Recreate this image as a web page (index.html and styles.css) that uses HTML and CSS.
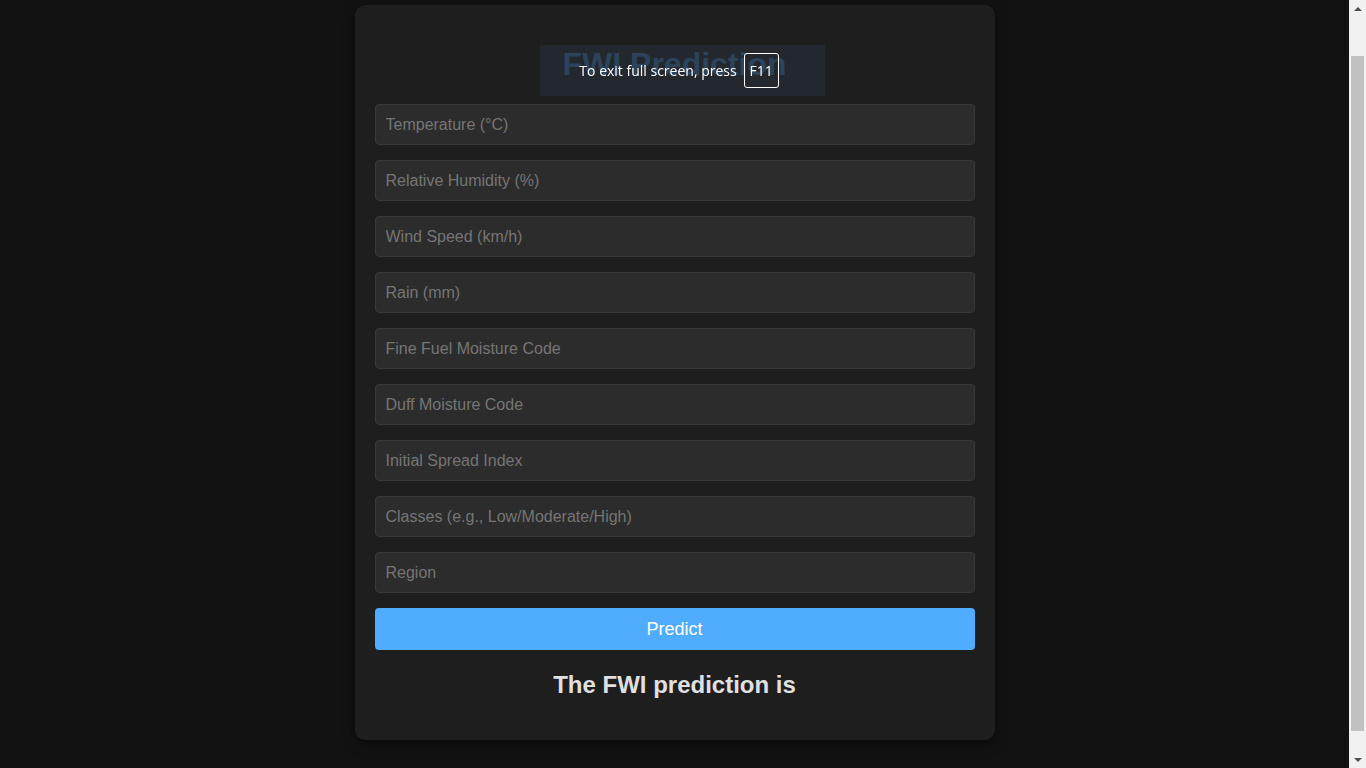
FILE: index.html
```html
<!DOCTYPE html>
<html lang="en">
<head>
<meta charset="utf-8">
<title>FWI Prediction</title>
<link rel="stylesheet" href="styles.css">
</head>
<body>
<main class="page">
  <div class="card">
    <h1 class="title">FWI Prediction</h1>
    <form class="form">
      <input class="field" type="text" placeholder="Temperature (°C)">
      <input class="field" type="text" placeholder="Relative Humidity (%)">
      <input class="field" type="text" placeholder="Wind Speed (km/h)">
      <input class="field" type="text" placeholder="Rain (mm)">
      <input class="field" type="text" placeholder="Fine Fuel Moisture Code">
      <input class="field" type="text" placeholder="Duff Moisture Code">
      <input class="field" type="text" placeholder="Initial Spread Index">
      <input class="field" type="text" placeholder="Classes (e.g., Low/Moderate/High)">
      <input class="field" type="text" placeholder="Region">
      <button class="predict" type="button">Predict</button>
    </form>
    <h2 class="result">The FWI prediction is</h2>
  </div>
</main>
<aside class="scrollbar">
  <div class="sb-btn"><span class="arrow-up"></span></div>
  <div class="sb-track"><div class="sb-thumb"></div></div>
  <div class="sb-btn"><span class="arrow-down"></span></div>
</aside>
<div class="fs-toast"><span>To exit full screen, press</span><span class="key">F11</span></div>
</body>
</html>
```
FILE: styles.css
```css
html, body {
  margin: 0;
  padding: 0;
  height: 100%;
  overflow: hidden;
}
body {
  display: flex;
  background: #121212;
  font-family: "Liberation Sans", Arial, sans-serif;
  color: #e0e0e0;
}
.page {
  flex: 1;
  padding-top: 5px;
  overflow: hidden;
}
.scrollbar {
  width: 17px;
  flex: none;
  display: flex;
  flex-direction: column;
  background: #f1f1f1;
}
.sb-btn {
  height: 17px;
  flex: none;
  display: flex;
  justify-content: center;
  align-items: center;
}
.arrow-up {
  width: 0;
  height: 0;
  border-left: 4px solid transparent;
  border-right: 4px solid transparent;
  border-bottom: 4px solid #505050;
}
.arrow-down {
  width: 0;
  height: 0;
  border-left: 4px solid transparent;
  border-right: 4px solid transparent;
  border-top: 4px solid #505050;
}
.sb-track {
  flex: 1;
}
.sb-thumb {
  margin: 39px 2px 0;
  height: 675px;
  background: #c1c1c1;
}
.card {
  width: 600px;
  margin: 0 auto;
  padding: 20px;
  background: #1e1e1e;
  border-radius: 10px;
  box-shadow: 0 4px 12px rgba(0, 0, 0, 0.5);
}
.title {
  text-align: center;
  color: #4dabf7;
  font-size: 32px;
  margin: 21px 0;
  line-height: 37px;
}
.form {
  display: flex;
  flex-direction: column;
  gap: 15px;
}
.field {
  box-sizing: border-box;
  height: 41px;
  width: 100%;
  padding: 0 10px;
  margin: 0;
  background: #2c2c2c;
  border: 1px solid #383838;
  border-radius: 4px;
  color: #e0e0e0;
  font-family: "Liberation Sans", Arial, sans-serif;
  font-size: 16px;
  outline: none;
}
.field::placeholder {
  color: #757575;
}
.predict {
  height: 42px;
  width: 100%;
  border: none;
  border-radius: 4px;
  background: #4facfe;
  color: #ffffff;
  font-family: "Liberation Sans", Arial, sans-serif;
  font-size: 18px;
  cursor: pointer;
}
.result {
  text-align: center;
  font-size: 24px;
  margin: 21px 0;
  line-height: 28px;
  color: #e0e0e0;
}
.fs-toast {
  position: fixed;
  top: 45px;
  left: 540px;
  width: 285px;
  height: 51px;
  box-sizing: border-box;
  padding-right: 7px;
  background: rgba(36, 41, 50, 0.8);
  display: flex;
  align-items: center;
  justify-content: center;
  gap: 7px;
  color: #ffffff;
  font-family: "Open Sans", "Noto Sans", sans-serif;
  font-size: 14px;
}
.key {
  display: inline-flex;
  align-items: center;
  justify-content: center;
  width: 35px;
  height: 35px;
  box-sizing: border-box;
  border: 1px solid #ffffff;
  border-radius: 3px;
}
```
